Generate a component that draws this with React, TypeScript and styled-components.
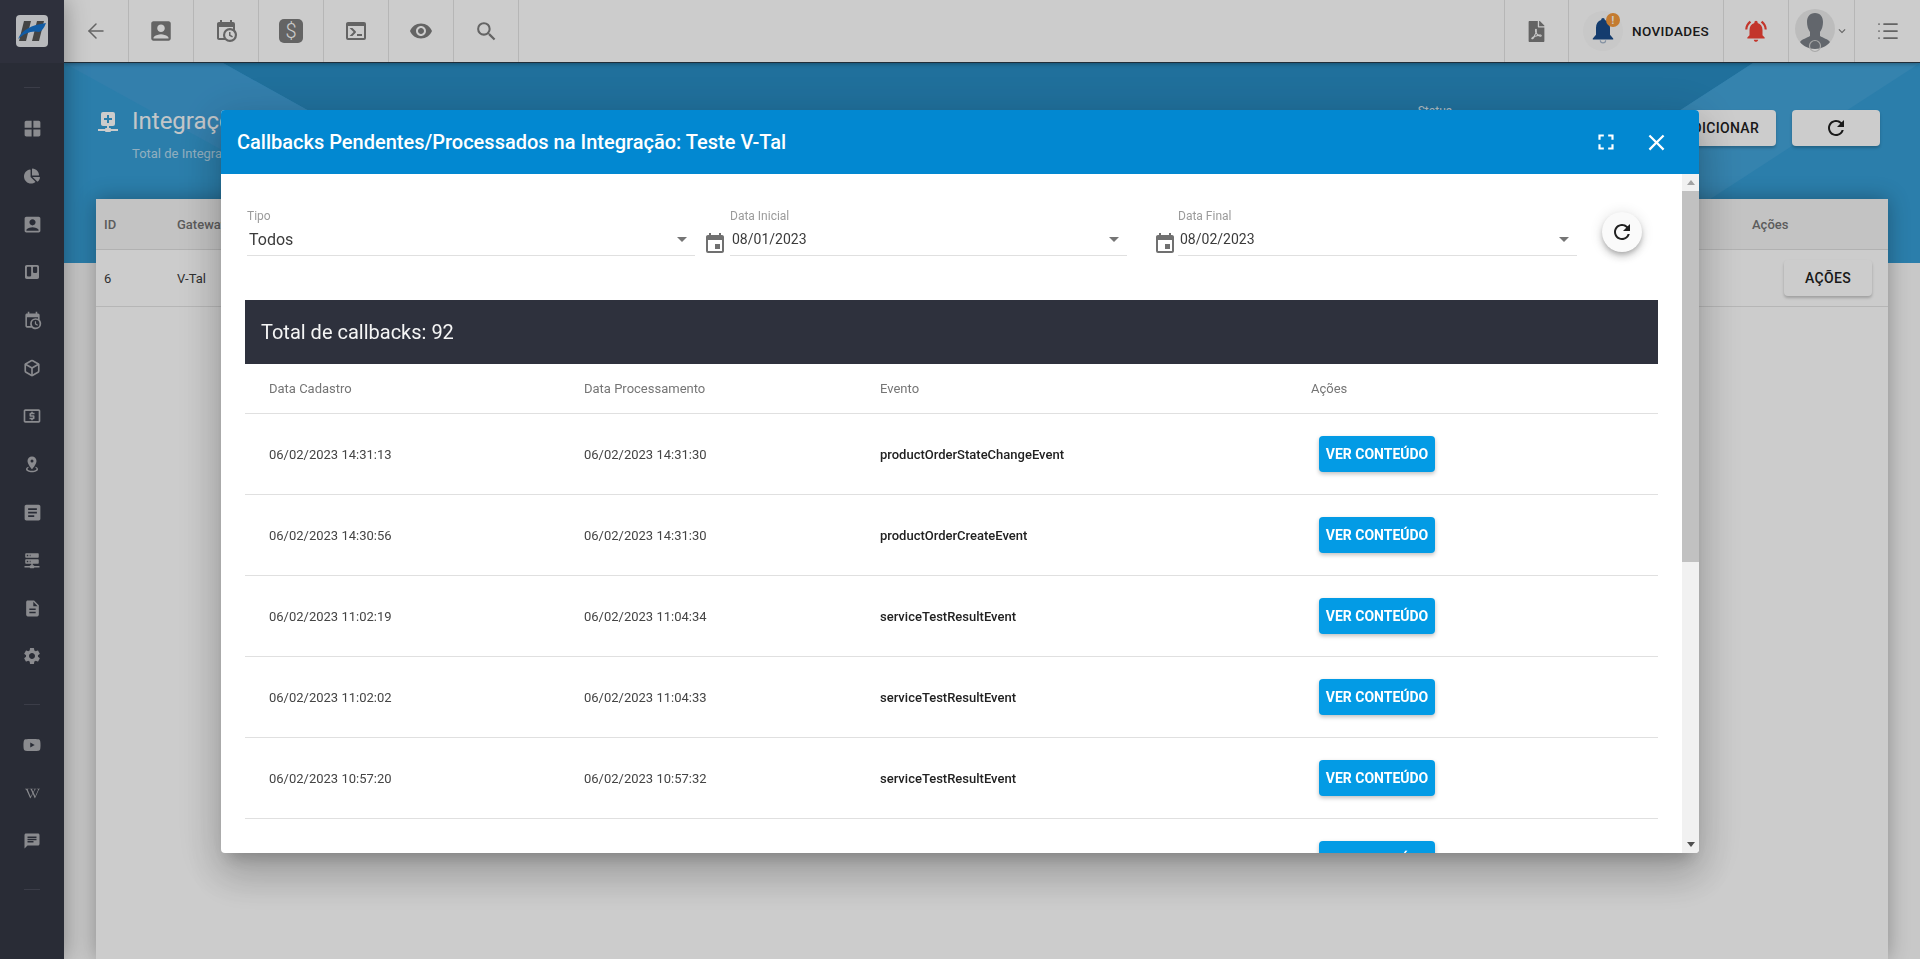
import React from 'react'
import styled, {createGlobalStyle} from 'styled-components'
import {ArrowLeft, Box, List} from 'lucide-react'
import {
  MdAccountBox, MdArticle, MdChat, MdClose, MdDescription, MdEvent, MdExpandMore, MdFullscreen,
  MdLocalAtm, MdNotificationsActive, MdRefresh, MdSearch, MdSettings, MdVisibility, MdWindow,
} from 'react-icons/md'
import {FaChartPie, FaFilePdf, FaTrello, FaWikipediaW, FaYoutube} from 'react-icons/fa'

const GlobalStyle = createGlobalStyle`
  html, body {
    margin: 0;
    height: 100%;
    overflow: hidden;
    background: #fafafa;
    font-family: Roboto, "Liberation Sans", sans-serif;
  }
  * { box-sizing: border-box; }
`

const mdi = {
  calendarClock: 'M15,13H16.5V15.82L18.94,17.23L18.19,18.53L15,16.69V13M19,8H5V19H9.67C9.24,18.09 9,17.07 9,16A7,7 0 0,1 16,9C17.07,9 18.09,9.24 19,9.67V8M5,21C3.89,21 3,20.1 3,19V5C3,3.89 3.89,3 5,3H6V1H8V3H16V1H18V3H19A2,2 0 0,1 21,5V11.1C22.24,12.36 23,14.09 23,16A7,7 0 0,1 16,23C14.09,23 12.36,22.24 11.1,21H5M16,11.15A4.85,4.85 0 0,0 11.15,16C11.15,18.68 13.32,20.85 16,20.85A4.85,4.85 0 0,0 20.85,16C20.85,13.32 18.68,11.15 16,11.15Z',
  console: 'M20,19V7H4V19H20M20,3A2,2 0 0,1 22,5V19A2,2 0 0,1 20,21H4A2,2 0 0,1 2,19V5C2,3.89 2.9,3 4,3H20M13,17V15H18V17H13M9.58,13L5.57,9H8.4L11.7,12.3C12.09,12.69 12.09,13.33 11.7,13.72L8.42,17H5.59L9.58,13Z',
  mapMarkerRadius: 'M12,2C15.31,2 18,4.66 18,7.95C18,12.41 12,19 12,19C12,19 6,12.41 6,7.95C6,4.66 8.69,2 12,2M12,6A2,2 0 0,0 10,8A2,2 0 0,0 12,10A2,2 0 0,0 14,8A2,2 0 0,0 12,6M20,19C20,21.21 16.42,23 12,23C7.58,23 4,21.21 4,19C4,17.71 5.22,16.56 7.11,15.83L7.75,16.74C6.67,17.19 6,17.81 6,18.5C6,19.88 8.69,21 12,21C15.31,21 18,19.88 18,18.5C18,17.81 17.33,17.19 16.25,16.74L16.89,15.83C18.78,16.56 20,17.71 20,19Z',
  serverNetwork: 'M13,19H14A1,1 0 0,1 15,20H22V22H15A1,1 0 0,1 14,23H10A1,1 0 0,1 9,22H2V20H9A1,1 0 0,1 10,19H11V17H4A1,1 0 0,1 3,16V12A1,1 0 0,1 4,11H20A1,1 0 0,1 21,12V16A1,1 0 0,1 20,17H13V19M4,3H20A1,1 0 0,1 21,4V8A1,1 0 0,1 20,9H4A1,1 0 0,1 3,8V4A1,1 0 0,1 4,3M9,7H10V5H9V7M9,15H10V13H9V15M5,5V7H7V5H5M5,13V15H7V13H5Z',
  plusNetwork: 'M16,11V9H13V6H11V9H8V11H11V14H13V11H16M17,3A2,2 0 0,1 19,5V15A2,2 0 0,1 17,17H13V19H14A1,1 0 0,1 15,20H22V22H15A1,1 0 0,1 14,23H10A1,1 0 0,1 9,22H2V20H9A1,1 0 0,1 10,19H11V17H7C5.89,17 5,16.1 5,15V5A2,2 0 0,1 7,3H17Z',
}

const MdiIcon = ({path, size}: {path: string; size: number}) => (
  <svg width={size} height={size} viewBox="0 0 24 24" fill="currentColor"><path d={path}/></svg>
)

const Page = styled.div`
  display: flex;
  height: 100vh;
  overflow: hidden;
`

const Sidebar = styled.aside`
  flex: 0 0 64px;
  display: flex;
  flex-direction: column;
  background: #343844;
  box-shadow: 0 0 24px rgba(0, 0, 0, .35);
  z-index: 3;
`

const LogoBox = styled.div`
  height: 63px;
  padding-top: 15px;
  display: flex;
  justify-content: center;
  background: #3a3d4b;
`

const SideRule = styled.div`
  width: 16px;
  height: 1px;
  margin: ${p => p.$margin};
  align-self: center;
  background: #4a4d5a;
`

const SideItem = styled.div`
  height: 48px;
  display: flex;
  align-items: center;
  justify-content: center;
  color: #adaeb3;
`

const Main = styled.div`
  flex: 1;
  min-width: 0;
  display: flex;
  flex-direction: column;
`

const TopBar = styled.header`
  flex: 0 0 63px;
  display: flex;
  justify-content: space-between;
  background: #fff;
  border-bottom: 1px solid #2a3a48;
  box-shadow: 0 1px 4px rgba(0, 0, 0, .3);
  z-index: 2;
`

const BarGroup = styled.div`
  display: flex;
`

const BarCell = styled.div`
  width: ${p => p.$width || 65}px;
  display: flex;
  align-items: center;
  justify-content: center;
  gap: ${p => p.$gap || 0}px;
  color: #7d7d7d;
  border-right: ${p => (p.$last ? '0' : '1px solid #e4e4e4')};
  border-left: ${p => (p.$lead ? '1px solid #e4e4e4' : '0')};
`

const DollarBadge = styled.span`
  width: 24px;
  height: 24px;
  border-radius: 5px;
  display: flex;
  align-items: center;
  justify-content: center;
  background: #7d7d7d;
  color: #fff;
  font-size: 20px;
  font-weight: 300;
`

const NewsIcon = styled.div`
  position: relative;
  width: 40px;
  height: 40px;
  border-radius: 50%;
  display: flex;
  align-items: center;
  justify-content: center;
  background: #fbfbfb;
`

const NewsBadge = styled.span`
  position: absolute;
  top: 2px;
  right: 3px;
  width: 14px;
  height: 14px;
  border-radius: 50%;
  display: flex;
  align-items: center;
  justify-content: center;
  background: #f59a3c;
  color: #fff;
  font-size: 10px;
  font-weight: 700;
`

const NewsLabel = styled.span`
  font-size: 13.5px;
  font-weight: 500;
  letter-spacing: .4px;
  color: #212121;
`

const Content = styled.main`
  flex: 1;
  min-height: 0;
  display: flex;
  flex-direction: column;
`

const Banner = styled.section`
  position: relative;
  flex: 0 0 200px;
  display: flex;
  justify-content: space-between;
  padding: 47px 40px 0 32px;
  background: #369ed6;
  overflow: hidden;
`

const BannerShape = styled.div`
  position: absolute;
  inset: 0;
  background: ${p => p.$tint};
  clip-path: polygon(${p => p.$points});
`

const BannerTitle = styled.div`
  position: relative;
  display: flex;
  gap: 12px;
  color: #fff;
`

const BannerIcon = styled.div`
  margin-top: -1px;
  height: 24px;
`

const TitleText = styled.h1`
  margin: 0;
  font-size: 24px;
  font-weight: 400;
  line-height: 22px;
  color: #f4f8fb;
`

const SubTitle = styled.div`
  margin-top: 14px;
  font-size: 13px;
  line-height: 16px;
  color: rgba(255, 255, 255, .65);
`

const BannerActions = styled.div`
  position: relative;
  display: flex;
  gap: 16px;
  color: #fff;
`

const StatusLabel = styled.div`
  margin: -6px 198px 0 0;
  font-size: 12px;
  color: rgba(255, 255, 255, .85);
`

const PlainButton = styled.button`
  height: 36px;
  width: ${p => p.$width}px;
  padding: 0;
  border: 0;
  border-radius: 4px;
  display: flex;
  align-items: center;
  justify-content: center;
  background: #fff;
  color: #212121;
  font: 500 14px Roboto, sans-serif;
  letter-spacing: .3px;
  box-shadow: 0 2px 3px rgba(0, 0, 0, .22);
`

const Card = styled.section`
  flex: 1;
  margin: -64px 32px 0;
  background: #fff;
  position: relative;
  box-shadow: 0 0 20px rgba(0, 0, 0, .3);
`

const CardHead = styled.div`
  height: 51px;
  display: grid;
  grid-template-columns: 73px 1fr 136px;
  align-items: center;
  padding-left: 8px;
  background: #f4f4f4;
  border-bottom: 1px solid #dedede;
  font-size: 13px;
  font-weight: 500;
  color: #737373;
`

const CardRow = styled.div`
  height: 57px;
  display: grid;
  grid-template-columns: 73px 1fr 104px;
  align-items: center;
  padding-left: 8px;
  border-bottom: 1px solid #e4e4e4;
  font-size: 13px;
  color: #3c3c3c;
`

const Overlay = styled.div`
  position: fixed;
  inset: 0;
  z-index: 10;
  display: flex;
  justify-content: center;
  align-items: flex-start;
  padding-top: 110px;
  background: rgba(0, 0, 0, .2);
`

const Dialog = styled.div`
  width: 1478px;
  height: 743px;
  display: flex;
  flex-direction: column;
  border-radius: 4px;
  overflow: hidden;
  background: #fff;
  box-shadow: 0 11px 15px -7px rgba(0, 0, 0, .2), 0 24px 38px 3px rgba(0, 0, 0, .14), 0 9px 46px 8px rgba(0, 0, 0, .12);
`

const DialogHead = styled.header`
  flex: 0 0 64px;
  display: flex;
  align-items: center;
  padding: 0 17px 0 16px;
  background: #0288d1;
  color: #fff;
`

const DialogTitle = styled.h2`
  flex: 1;
  margin: 0;
  font-size: 20px;
  font-weight: 500;
`

const HeadButton = styled.span`
  width: 51px;
  display: flex;
  justify-content: center;
`

const DialogBody = styled.div`
  flex: 1;
  min-height: 0;
  display: flex;
`

const BodyScroll = styled.div`
  flex: 1;
  min-width: 0;
  overflow: hidden;
  padding: 35px 24px 0;
`

const ScrollRail = styled.div`
  flex: 0 0 17px;
  display: flex;
  flex-direction: column;
  background: #f1f1f1;
`

const ScrollArrow = styled.div`
  flex: 0 0 17px;
  display: flex;
  align-items: center;
  justify-content: center;
  &::before {
    content: '';
    border-left: 4px solid transparent;
    border-right: 4px solid transparent;
    ${p => (p.$down ? 'border-top: 5px solid #505050;' : 'border-bottom: 5px solid #a3a3a3;')}
  }
`

const ScrollTrack = styled.div`
  flex: 1;
`

const ScrollThumb = styled.div`
  height: 371px;
  background: #c1c1c1;
`

const Filters = styled.div`
  display: flex;
  align-items: flex-end;
  margin-left: 2px;
`

const Field = styled.div`
  flex: 0 0 ${p => p.$width}px;
`

const FieldLabel = styled.label`
  display: block;
  font-size: 12px;
  line-height: 14px;
  color: #9b9b9b;
`

const FieldValue = styled.div`
  height: 33px;
  display: flex;
  align-items: center;
  justify-content: space-between;
  padding: 0 8px 0 2px;
  border-bottom: 1px solid #e0e0e0;
  font-size: ${p => p.$size}px;
  color: #3b3b3b;
`

const Caret = styled.span`
  border-left: 5px solid transparent;
  border-right: 5px solid transparent;
  border-top: 5px solid #757575;
`

const CalendarIcon = styled.span`
  margin: 0 ${p => p.$after}px 0 ${p => p.$before}px;
  height: 24px;
  display: flex;
  align-items: flex-end;
  color: #707070;
`

const RoundButton = styled.button`
  width: 40px;
  height: 40px;
  margin: 0 0 4px 25px;
  padding: 0;
  border: 0;
  border-radius: 50%;
  display: flex;
  align-items: center;
  justify-content: center;
  background: #fafafa;
  color: #212121;
  box-shadow: 0 3px 5px -1px rgba(0, 0, 0, .2), 0 5px 8px rgba(0, 0, 0, .14), 0 1px 14px rgba(0, 0, 0, .12);
`

const TotalBar = styled.div`
  height: 64px;
  margin-top: 44px;
  padding-left: 16px;
  display: flex;
  align-items: center;
  background: #2e313d;
  color: #f5f5f5;
  font-size: 20px;
`

const TableHead = styled.div`
  height: 50px;
  display: grid;
  grid-template-columns: 315px 296px 431px 1fr;
  align-items: center;
  padding-left: 24px;
  border-bottom: 1px solid #e0e0e0;
  font-size: 13px;
  color: #757575;
`

const TableRow = styled.div`
  height: 81px;
  display: grid;
  grid-template-columns: 315px 296px 431px 1fr;
  align-items: center;
  padding-left: 24px;
  border-bottom: 1px solid #e0e0e0;
  font-size: 13px;
  color: #444;
`

const EventName = styled.span`
  font-weight: 500;
  color: #212121;
`

const ViewButton = styled.button`
  width: 116px;
  height: 36px;
  margin-left: 8px;
  padding: 0;
  border: 0;
  border-radius: 4px;
  background: #039be5;
  color: #fff;
  font: 700 14px Roboto, sans-serif;
  box-shadow: 0 2px 4px rgba(0, 0, 0, .25);
`

const Logo = () => (
  <svg width="32" height="32" viewBox="0 0 32 32">
    <rect width="32" height="32" rx="4" fill="#e6e8ec"/>
    <path d="M8 6h7l-5 20H3zM21 6h7l-5 20h-7z" fill="#555"/>
    <path d="M2 24C6 15 15 10 30 8 28 13 26 16 23 17 17 15 8 18 2 24z" fill="#1673cf"/>
  </svg>
)

const NewsBell = () => (
  <svg width="26" height="28" viewBox="0 0 24 26">
    <path d="M12 1c1 0 1.7.8 1.7 1.8C16.800 3.700 18.500 6.500 18.500 10v6.500L21.500 20v1H2.500v-1l3-3.500V10c0-3.500 1.700-6.300 4.800-7.200C10.300 1.800 11 1 12 1z" fill="#194c8a"/>
    <path d="M9.500 21.500a2.500 2.500 0 0 0 5 0" fill="none" stroke="#a6b7cc" strokeWidth="1"/>
  </svg>
)

const Avatar = () => (
  <svg width="40" height="44" viewBox="0 0 40 44">
    <ellipse cx="20" cy="20" rx="20" ry="20" fill="#ececec"/>
    <path d="M20 4c5.500 0 8 4 8 9 0 4-1 7-3 10v4c3 2 8 3 10 6-3 4-9 7-15 7S8 37 5 33c2-3 7-4 10-6v-4c-2-3-3-6-3-10 0-5 2.500-9 8-9z" fill="#7b8088"/>
    <circle cx="20" cy="37" r="5.500" fill="none" stroke="#d4d4d4" strokeWidth="1.200"/>
  </svg>
)

const sideTop = [
  <MdWindow size={21}/>, <FaChartPie size={16}/>, <MdAccountBox size={21}/>, <FaTrello size={16}/>,
  <MdiIcon path={mdi.calendarClock} size={19}/>, <Box size={18} strokeWidth={2.2}/>, <MdLocalAtm size={20}/>,
  <MdiIcon path={mdi.mapMarkerRadius} size={18}/>, <MdArticle size={21}/>, <MdiIcon path={mdi.serverNetwork} size={18}/>,
  <MdDescription size={19}/>, <MdSettings size={20}/>,
]

const sideBottom = [<FaYoutube size={18}/>, <FaWikipediaW size={15}/>, <MdChat size={18}/>]

const rows = [
  {created: '06/02/2023 14:31:13', done: '06/02/2023 14:31:30', event: 'productOrderStateChangeEvent'},
  {created: '06/02/2023 14:30:56', done: '06/02/2023 14:31:30', event: 'productOrderCreateEvent'},
  {created: '06/02/2023 11:02:19', done: '06/02/2023 11:04:34', event: 'serviceTestResultEvent'},
  {created: '06/02/2023 11:02:02', done: '06/02/2023 11:04:33', event: 'serviceTestResultEvent'},
  {created: '06/02/2023 10:57:20', done: '06/02/2023 10:57:32', event: 'serviceTestResultEvent'},
  {created: '', done: '', event: ''},
]

const App = () => (
  <>
    <GlobalStyle/>
    <Page>
      <Sidebar>
        <LogoBox><Logo/></LogoBox>
        <SideRule $margin="24px 0 16px"/>
        {sideTop.map((icon, i) => <SideItem key={i}>{icon}</SideItem>)}
        <SideRule $margin="24px 0 16px"/>
        {sideBottom.map((icon, i) => <SideItem key={i}>{icon}</SideItem>)}
        <SideRule $margin="24px 0 0"/>
      </Sidebar>
      <Main>
        <TopBar>
          <BarGroup>
            <BarCell><ArrowLeft size={24} strokeWidth={1.5}/></BarCell>
            <BarCell><MdAccountBox size={26}/></BarCell>
            <BarCell><MdiIcon path={mdi.calendarClock} size={24}/></BarCell>
            <BarCell><DollarBadge>$</DollarBadge></BarCell>
            <BarCell><MdiIcon path={mdi.console} size={24}/></BarCell>
            <BarCell><MdVisibility size={24}/></BarCell>
            <BarCell><MdSearch size={25}/></BarCell>
          </BarGroup>
          <BarGroup>
            <BarCell $lead><FaFilePdf size={21}/></BarCell>
            <BarCell $width={155} $gap={9}>
              <NewsIcon>
                <NewsBell/>
                <NewsBadge>!</NewsBadge>
              </NewsIcon>
              <NewsLabel>NOVIDADES</NewsLabel>
            </BarCell>
            <BarCell><MdNotificationsActive size={26} color="#f44336"/></BarCell>
            <BarCell $width={66}><Avatar/><MdExpandMore size={14}/></BarCell>
            <BarCell $last><List size={24} strokeWidth={1.75}/></BarCell>
          </BarGroup>
        </TopBar>
        <Content>
          <Banner>
            <BannerShape $tint="#288cc3" $points="159px 0, 1689px 0, 1373px 205px, 500px 190px"/>
            <BannerShape $tint="#409fd8" $points="0 0, 159px 0, 500px 190px, 345px 190px"/>
            <BannerShape $tint="#43a4da" $points="1689px 0, 1856px 0, 1540px 205px, 1373px 205px"/>
            <BannerTitle>
              <BannerIcon><MdiIcon path={mdi.plusNetwork} size={24}/></BannerIcon>
              <div>
                <TitleText>Integrações de Callback</TitleText>
                <SubTitle>Total de Integrações: 1</SubTitle>
              </div>
            </BannerTitle>
            <BannerActions>
              <StatusLabel>Status</StatusLabel>
              <PlainButton $width={110}>ADICIONAR</PlainButton>
              <PlainButton $width={88}><MdRefresh size={24}/></PlainButton>
            </BannerActions>
          </Banner>
          <Card>
            <CardHead>
              <span>ID</span>
              <span>Gateway</span>
              <span>Ações</span>
            </CardHead>
            <CardRow>
              <span>6</span>
              <span>V-Tal</span>
              <PlainButton $width={88}>AÇÕES</PlainButton>
            </CardRow>
          </Card>
        </Content>
      </Main>
    </Page>
    <Overlay>
      <Dialog>
        <DialogHead>
          <DialogTitle>Callbacks Pendentes/Processados na Integração: Teste V-Tal</DialogTitle>
          <HeadButton><MdFullscreen size={26}/></HeadButton>
          <HeadButton><MdClose size={27}/></HeadButton>
        </DialogHead>
        <DialogBody>
          <BodyScroll>
            <Filters>
              <Field $width={448}>
                <FieldLabel>Tipo</FieldLabel>
                <FieldValue $size={16}>Todos<Caret/></FieldValue>
              </Field>
              <CalendarIcon $before={8} $after={3}><MdEvent size={24}/></CalendarIcon>
              <Field $width={397}>
                <FieldLabel>Data Inicial</FieldLabel>
                <FieldValue $size={14}>08/01/2023<Caret/></FieldValue>
              </Field>
              <CalendarIcon $before={26} $after={1}><MdEvent size={24}/></CalendarIcon>
              <Field $width={399}>
                <FieldLabel>Data Final</FieldLabel>
                <FieldValue $size={14}>08/02/2023<Caret/></FieldValue>
              </Field>
              <RoundButton><MdRefresh size={24}/></RoundButton>
            </Filters>
            <TotalBar>Total de callbacks: 92</TotalBar>
            <TableHead>
              <span>Data Cadastro</span>
              <span>Data Processamento</span>
              <span>Evento</span>
              <span>Ações</span>
            </TableHead>
            {rows.map((row, i) => (
              <TableRow key={i}>
                <span>{row.created}</span>
                <span>{row.done}</span>
                <EventName>{row.event}</EventName>
                <ViewButton>VER CONTEÚDO</ViewButton>
              </TableRow>
            ))}
          </BodyScroll>
          <ScrollRail>
            <ScrollArrow/>
            <ScrollTrack><ScrollThumb/></ScrollTrack>
            <ScrollArrow $down/>
          </ScrollRail>
        </DialogBody>
      </Dialog>
    </Overlay>
  </>
)

export default App
